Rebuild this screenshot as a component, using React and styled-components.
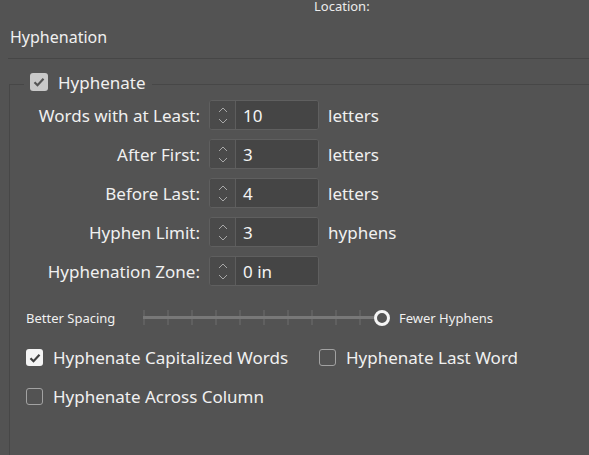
import React from 'react';
import styled, { createGlobalStyle } from 'styled-components';

const Global = createGlobalStyle`
  html, body {
    margin: 0;
    background: #535353;
    overflow: hidden;
  }
  body {
    font-family: "Noto Sans", "Open Sans", sans-serif;
    color: #f0f0f0;
  }
`;

const Page = styled.div`
  width: 589px;
  height: 455px;
  overflow: hidden;
`;

const TopLabel = styled.div`
  padding-left: 314px;
  margin-top: -2px;
  height: 16px;
  font-size: 13px;
  line-height: 16px;
  color: #ececec;
`;

const SectionTitle = styled.div`
  padding: 12px 0 0 10px;
  font-size: 16px;
  line-height: 22px;
  height: 26px;
`;

const Separator = styled.div`
  margin: 6px 0 0 8px;
  height: 1px;
  background: #464646;
`;

const Group = styled.fieldset`
  margin: 12px 0 0 9px;
  padding: 3px 0 0 0;
  width: 640px;
  height: 420px;
  border: 1px solid #474747;
  border-right: none;
  border-bottom: none;
`;

const Legend = styled.legend`
  margin-left: 14px;
  padding: 0 6px 4px 6px;
  display: flex;
  align-items: center;
  gap: 10px;
  height: 22px;
  font-size: 17px;
`;

const Box = styled.span`
  box-sizing: border-box;
  width: ${p => p.$size}px;
  height: ${p => p.$size}px;
  border-radius: 3px;
  display: inline-flex;
  align-items: center;
  justify-content: center;
  flex-shrink: 0;
  background: ${p => (p.$checked ? p.$fill : 'transparent')};
  border: ${p => (p.$checked ? 'none' : '1.5px solid #a2a2a2')};
`;

const Fields = styled.div`
  display: grid;
  grid-template-columns: 190px 110px auto;
  column-gap: 9px;
  row-gap: 9px;
  align-items: center;
`;

const Label = styled.span`
  text-align: right;
  font-size: 17px;
  white-space: nowrap;
`;

const Spinner = styled.div`
  box-sizing: border-box;
  height: 30px;
  display: flex;
  border: 1px solid #5f5f5f;
  border-radius: 3px;
  background: #474747;
  overflow: hidden;
`;

const Arrows = styled.div`
  width: 25px;
  display: flex;
  flex-direction: column;
  align-items: center;
  justify-content: center;
  gap: 5px;
  border-right: 1px solid #5d5d5d;
  background: #4a4a4a;
`;

const Value = styled.div`
  flex: 1;
  padding-left: 7px;
  display: flex;
  align-items: center;
  font-size: 17px;
  color: #f4f4f4;
  background: #454545;
`;

const Unit = styled.span`
  font-size: 17px;
`;

const SliderRow = styled.div`
  display: flex;
  align-items: center;
  margin: 16px 0 0 16px;
  height: 32px;
  font-size: 13px;
`;

const SliderText = styled.span`
  white-space: nowrap;
  width: ${p => (p.$width ? `${p.$width}px` : 'auto')};
  flex-shrink: 0;
`;

const Track = styled.svg`
  margin-right: 8px;
  flex-shrink: 0;
`;

const Options = styled.div`
  display: grid;
  grid-template-columns: 293px auto;
  row-gap: 14px;
  margin: 11px 0 0 16px;
`;

const Option = styled.label`
  display: flex;
  align-items: center;
  gap: 10px;
  height: 25px;
  font-size: 17px;
  white-space: nowrap;
`;

const Check = ({ color = '#4a4a4a' }) => (
  <svg width="12" height="10" viewBox="0 0 12 10">
    <path d="M1.5 5.2 L4.5 8.2 L10.5 1.8" fill="none" stroke={color} strokeWidth="2.2" />
  </svg>
);

const Chevron = ({ down }) => (
  <svg width="10" height="6" viewBox="0 0 10 6">
    <path
      d={down ? 'M1 1 L5 5 L9 1' : 'M1 5 L5 1 L9 5'}
      fill="none"
      stroke="#a8a8a8"
      strokeWidth="1"
    />
  </svg>
);

const fields = [
  { label: 'Words with at Least:', value: '10', unit: 'letters' },
  { label: 'After First:', value: '3', unit: 'letters' },
  { label: 'Before Last:', value: '4', unit: 'letters' },
  { label: 'Hyphen Limit:', value: '3', unit: 'hyphens' },
  { label: 'Hyphenation Zone:', value: '0 in', unit: '' },
];

const options = [
  { text: 'Hyphenate Capitalized Words', checked: true },
  { text: 'Hyphenate Last Word', checked: false },
  { text: 'Hyphenate Across Column', checked: false },
];

export default function App() {
  const ticks = Array.from({ length: 10 }, (_, i) => 1 + i * 24);
  return (
    <Page>
      <Global />
      <TopLabel>Location:</TopLabel>
      <SectionTitle>Hyphenation</SectionTitle>
      <Separator />
      <Group>
        <Legend>
          <Box $size={18} $checked $fill="#c9c9c9">
            <Check color="#555" />
          </Box>
          Hyphenate
        </Legend>
        <Fields>
          {fields.map(f => (
            <React.Fragment key={f.label}>
              <Label>{f.label}</Label>
              <Spinner>
                <Arrows>
                  <Chevron />
                  <Chevron down />
                </Arrows>
                <Value>{f.value}</Value>
              </Spinner>
              <Unit>{f.unit}</Unit>
            </React.Fragment>
          ))}
        </Fields>
        <SliderRow>
          <SliderText $width={117}>Better Spacing</SliderText>
          <Track width="248" height="20" viewBox="0 0 248 20">
            {ticks.map(x => (
              <line key={x} x1={x} y1="2" x2={x} y2="17" stroke="#6a6a6a" strokeWidth="1.2" />
            ))}
            <line x1="0" y1="9.5" x2="231" y2="9.5" stroke="#787878" strokeWidth="3" />
            <circle cx="239" cy="10" r="6.5" fill="#535353" stroke="#f4f4f4" strokeWidth="3" />
          </Track>
          <SliderText>Fewer Hyphens</SliderText>
        </SliderRow>
        <Options>
          {options.map(o => (
            <Option key={o.text}>
              <Box $size={17} $checked={o.checked} $fill="#f4f4f4">
                {o.checked && <Check color="#3f3f3f" />}
              </Box>
              {o.text}
            </Option>
          ))}
        </Options>
      </Group>
    </Page>
  );
}
